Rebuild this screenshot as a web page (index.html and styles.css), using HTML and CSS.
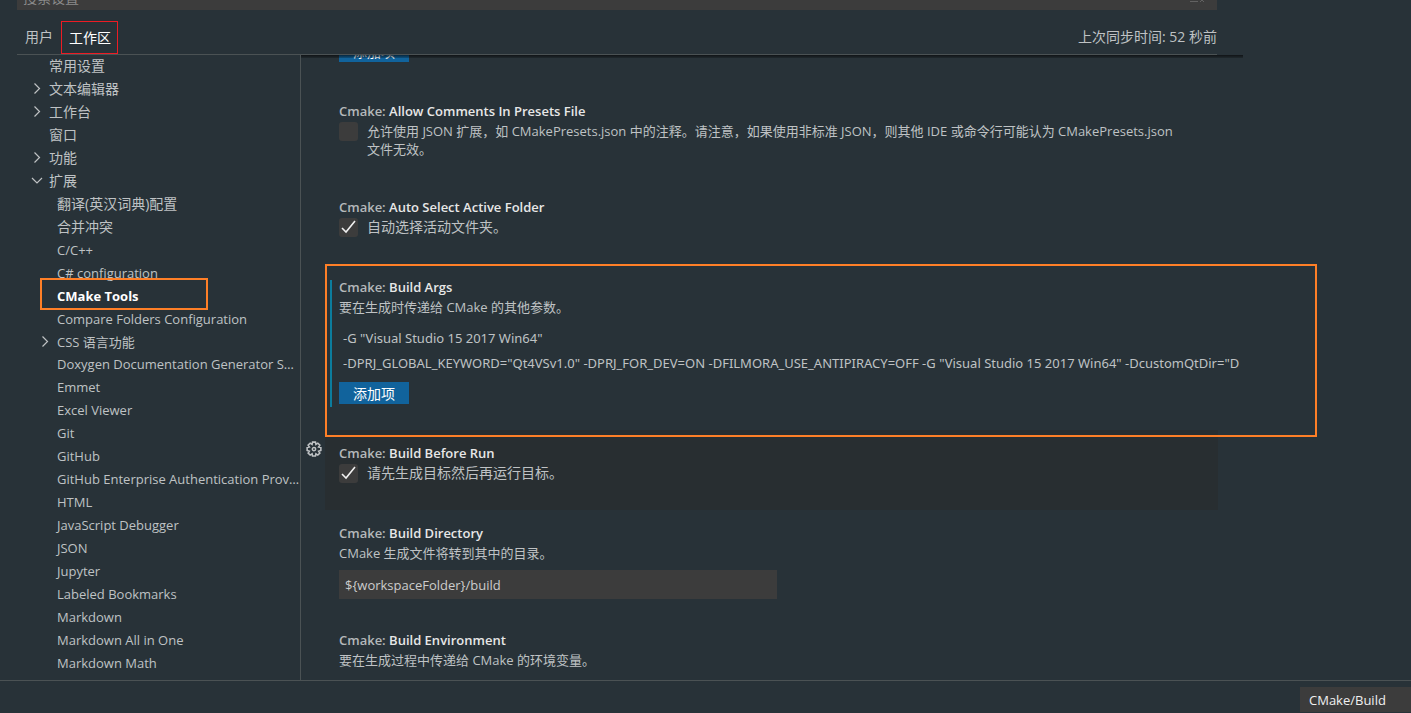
FILE: index.html
```html
<!DOCTYPE html>
<html lang="zh-CN">
<head>
<meta charset="utf-8">
<title>设置</title>
<link rel="stylesheet" href="styles.css">
</head>
<body>
<svg class="defs" aria-hidden="true">
  <symbol id="right" viewBox="0 0 16 16"><path d="M5.500 2.500 L10.500 7.500 L5.500 12.500" fill="none" stroke="currentColor" stroke-width="1.200"/></symbol>
  <symbol id="down" viewBox="0 0 16 16"><path d="M3 5 L8 10 L13 5" fill="none" stroke="currentColor" stroke-width="1.200"/></symbol>
</svg>
<main class="editor">
  <header class="head">
    <div class="search">
      <input class="search-input" type="text" placeholder="搜索设置" aria-label="搜索设置">
      <button class="clear" aria-label="清除"><svg viewBox="0 0 16 16"><path d="M1 4h13M1 8h8M1 12.500h8M11 9l4 4M15 9l-4 4" fill="none" stroke="currentColor"/></svg></button>
    </div>
    <div class="tabs">
      <button class="tab">用户</button>
      <button class="tab active">工作区</button>
      <span class="sync">上次同步时间: 52 秒前</span>
    </div>
  </header>
  <div class="body">
    <nav class="toc">
      <a class="row top cjk" href="#"><span class="tw"></span>常用设置</a>
      <a class="row top cjk" href="#"><svg class="tw"><use href="#right"/></svg>文本编辑器</a>
      <a class="row top cjk" href="#"><svg class="tw"><use href="#right"/></svg>工作台</a>
      <a class="row top cjk" href="#"><span class="tw"></span>窗口</a>
      <a class="row top cjk" href="#"><svg class="tw"><use href="#right"/></svg>功能</a>
      <a class="row top cjk" href="#"><svg class="tw"><use href="#down"/></svg>扩展</a>
      <a class="row cjk" href="#"><span class="tw"></span>翻译(英汉词典)配置</a>
      <a class="row cjk" href="#"><span class="tw"></span>合并冲突</a>
      <a class="row" href="#"><span class="tw"></span>C/C++</a>
      <a class="row" href="#"><span class="tw"></span>C# configuration</a>
      <a class="row selected" href="#"><span class="tw"></span>CMake Tools</a>
      <a class="row" href="#"><span class="tw"></span>Compare Folders Configuration</a>
      <a class="row" href="#"><svg class="tw"><use href="#right"/></svg>CSS 语言功能</a>
      <a class="row" href="#"><span class="tw"></span><span class="name">Doxygen Documentation Generator Settings</span></a>
      <a class="row" href="#"><span class="tw"></span>Emmet</a>
      <a class="row" href="#"><span class="tw"></span>Excel Viewer</a>
      <a class="row" href="#"><span class="tw"></span>Git</a>
      <a class="row" href="#"><span class="tw"></span>GitHub</a>
      <a class="row" href="#"><span class="tw"></span><span class="name">GitHub Enterprise Authentication Provider</span></a>
      <a class="row" href="#"><span class="tw"></span>HTML</a>
      <a class="row" href="#"><span class="tw"></span>JavaScript Debugger</a>
      <a class="row" href="#"><span class="tw"></span>JSON</a>
      <a class="row" href="#"><span class="tw"></span>Jupyter</a>
      <a class="row" href="#"><span class="tw"></span>Labeled Bookmarks</a>
      <a class="row" href="#"><span class="tw"></span>Markdown</a>
      <a class="row" href="#"><span class="tw"></span>Markdown All in One</a>
      <a class="row" href="#"><span class="tw"></span>Markdown Math</a>
    </nav>
    <div class="settings">
      <div class="scrolled"><button class="add">添加项</button></div>
      <section class="item">
        <h2 class="title"><span class="cat">Cmake:</span> Allow Comments In Presets File</h2>
        <label class="check"><input class="box" type="checkbox"><span>允许使用 JSON 扩展，如 CMakePresets.json 中的注释。请注意，如果使用非标准 JSON，则其他 IDE 或命令行可能认为 CMakePresets.json 文件无效。</span></label>
      </section>
      <section class="item">
        <h2 class="title"><span class="cat">Cmake:</span> Auto Select Active Folder</h2>
        <label class="check cjk"><input class="box" type="checkbox" checked><span>自动选择活动文件夹。</span></label>
      </section>
      <section class="item modified">
        <h2 class="title"><span class="cat">Cmake:</span> Build Args</h2>
        <p class="desc">要在生成时传递给 CMake 的其他参数。</p>
        <ul class="args">
          <li class="arg">-G "Visual Studio 15 2017 Win64"</li>
          <li class="arg">-DPRJ_GLOBAL_KEYWORD="Qt4VSv1.0" -DPRJ_FOR_DEV=ON -DFILMORA_USE_ANTIPIRACY=OFF -G "Visual Studio 15 2017 Win64" -DcustomQtDir="D</li>
        </ul>
        <button class="add">添加项</button>
      </section>
      <section class="item focused">
        <button class="gear" aria-label="更多操作"><svg viewBox="0 0 16 16"><path d="M6.700 1h2.600l.4 2 1.700-1.100 1.800 1.800L12.100 5.300l2 .5v2.600l-2 .6 1.100 1.700-1.800 1.800-1.700-1.100-.4 2H6.700l-.4-2-1.700 1.100-1.800-1.800L3.900 9l-2-.6V5.800l2-.5-1.100-1.600 1.800-1.800L6.300 3z" fill="none" stroke="currentColor" stroke-width="1.400"/><circle cx="8" cy="7.200" r="1.500" fill="none" stroke="currentColor" stroke-width="1.300"/></svg></button>
        <h2 class="title"><span class="cat">Cmake:</span> Build Before Run</h2>
        <label class="check cjk"><input class="box" type="checkbox" checked><span>请先生成目标然后再运行目标。</span></label>
      </section>
      <section class="item">
        <h2 class="title"><span class="cat">Cmake:</span> Build Directory</h2>
        <p class="desc">CMake 生成文件将转到其中的目录。</p>
        <input class="text" type="text" value="${workspaceFolder}/build" aria-label="Build Directory">
      </section>
      <section class="item">
        <h2 class="title"><span class="cat">Cmake:</span> Build Environment</h2>
        <p class="desc">要在生成过程中传递给 CMake 的环境变量。</p>
      </section>
    </div>
  </div>
</main>
<footer class="panel">
  <select class="channel" aria-label="输出"><option>CMake/Build</option></select>
</footer>
</body>
</html>
```
FILE: styles.css
```css
*, ::before, ::after { box-sizing: border-box; }
body {
  margin: 0;
  height: 100vh;
  display: flex;
  flex-direction: column;
  overflow: hidden;
  background: #283238;
  color: #bfc2c4;
  font: 13px/18px "Open Sans", "Noto Sans CJK SC", sans-serif;
}
button, input, select { font: inherit; color: inherit; border: 0; padding: 0; background: none; border-radius: 0; }
.defs { display: none; }
.cjk { font-size: 14px; }

.editor { flex: 1; min-height: 0; display: flex; flex-direction: column; }
.head { margin-left: 17px; max-width: 1200px; border-bottom: 1px solid #4b5254; }
.search { height: 10px; display: flex; align-items: flex-end; overflow: hidden; background: #3c3c3c; }
.search-input { flex: 1; height: 26px; padding: 0 6px; font-size: 14px; }
.search-input::placeholder { color: #8b8b8b; }
.clear { width: 16px; height: 26px; margin-right: 12px; color: #626262; }
.clear svg { display: block; width: 16px; height: 16px; margin: 0 auto; }
.tabs { height: 44px; display: flex; align-items: center; padding: 10px 0 0 8px; font-size: 14px; }
.tab { height: 33px; padding: 0; }
.tab.active { margin-left: 8px; padding: 2px 6px 0 7px; border: 1px solid #ed1c24; color: #fff; }
.sync { margin-left: auto; }

.body { flex: 1; min-height: 0; display: flex; }
.toc { position: relative; width: 301px; display: grid; grid-auto-rows: 1fr; padding: 0 0 6px; border-right: 1px solid #4b5254; }
.row { display: flex; align-items: center; min-width: 0; min-height: 0; padding-left: 37px; gap: 4px; color: inherit; text-decoration: none; white-space: nowrap; position: relative; }
.row.top { padding-left: 29px; }
.tw { flex: none; width: 16px; height: 16px; }
.name { overflow: hidden; text-overflow: ellipsis; }
.selected { color: #fff; font-weight: 700; }
.selected::after { content: ""; position: absolute; left: 40px; top: -6px; width: 168px; height: 32px; border: 2px solid #ff7f27; }

.settings { flex: 1; min-width: 0; max-width: 942px; position: relative; }
.settings::before { content: ""; position: absolute; left: 0; right: 0; top: 0; height: 3px; background: linear-gradient(rgba(0, 0, 0, 0.6), rgba(0, 0, 0, 0.2)); z-index: 1; }
.scrolled { height: 7px; margin: 0 38px 26px; display: flex; align-items: flex-end; overflow: hidden; }
.add { width: 70px; height: 22px; padding-top: 2px; background: #11639c; color: #fff; font-size: 14px; }
.item { position: relative; margin: 0 25px 0 24px; padding: 14px 14px 18px; }
.title { margin: 0 0 2px; font-size: 13px; line-height: 18px; font-weight: 600; color: #e7e7e7; }
.cat { color: #b4b8ba; }
.desc { margin: 0; }
.check { display: flex; align-items: flex-start; gap: 9px; min-height: 28px; padding: 0 18px 8px 0; }
.box { appearance: none; flex: none; width: 19px; height: 19px; margin: 0; border-radius: 3px; background: #3c3c3c; }
.box:checked { background: #3c3c3c url("data:image/svg+xml,%3Csvg xmlns='http://www.w3.org/2000/svg' viewBox='0 0 19 19'%3E%3Cpath d='M3 10l4 4L16 3' fill='none' stroke='%23f0f0f0' stroke-width='1.600'/%3E%3C/svg%3E"); }
.modified { padding-bottom: 26px; }
.modified::before { content: ""; position: absolute; left: 5px; top: 16px; bottom: 23px; width: 2px; background: #0c7d9d; }
.modified::after { content: ""; position: absolute; left: 0; right: -99px; top: 0; height: 173px; border: 2px solid #ff7f27; z-index: 1; pointer-events: none; }
.args { list-style: none; margin: 10px -39px 6px 0; padding: 0 0 0 4px; font-family: "Noto Sans", "Noto Sans CJK SC", sans-serif; }
.arg { line-height: 25px; white-space: nowrap; overflow: hidden; }
.focused { background: #282e31; }
.gear { position: absolute; left: -20px; top: 11px; width: 18px; height: 18px; }
.gear svg { display: block; width: 18px; height: 18px; }
.text { display: block; width: 438px; height: 29px; margin-top: 8px; padding: 0 6px; background: #3c3c3c; color: #ccc; }

.panel { height: 33px; border-top: 1px solid #4b5254; display: flex; justify-content: flex-end; align-items: flex-end; padding-bottom: 1px; }
.channel { appearance: none; width: 111px; height: 25px; padding: 0 9px; background: #3c3c3c; color: #f0f0f0; }
```
